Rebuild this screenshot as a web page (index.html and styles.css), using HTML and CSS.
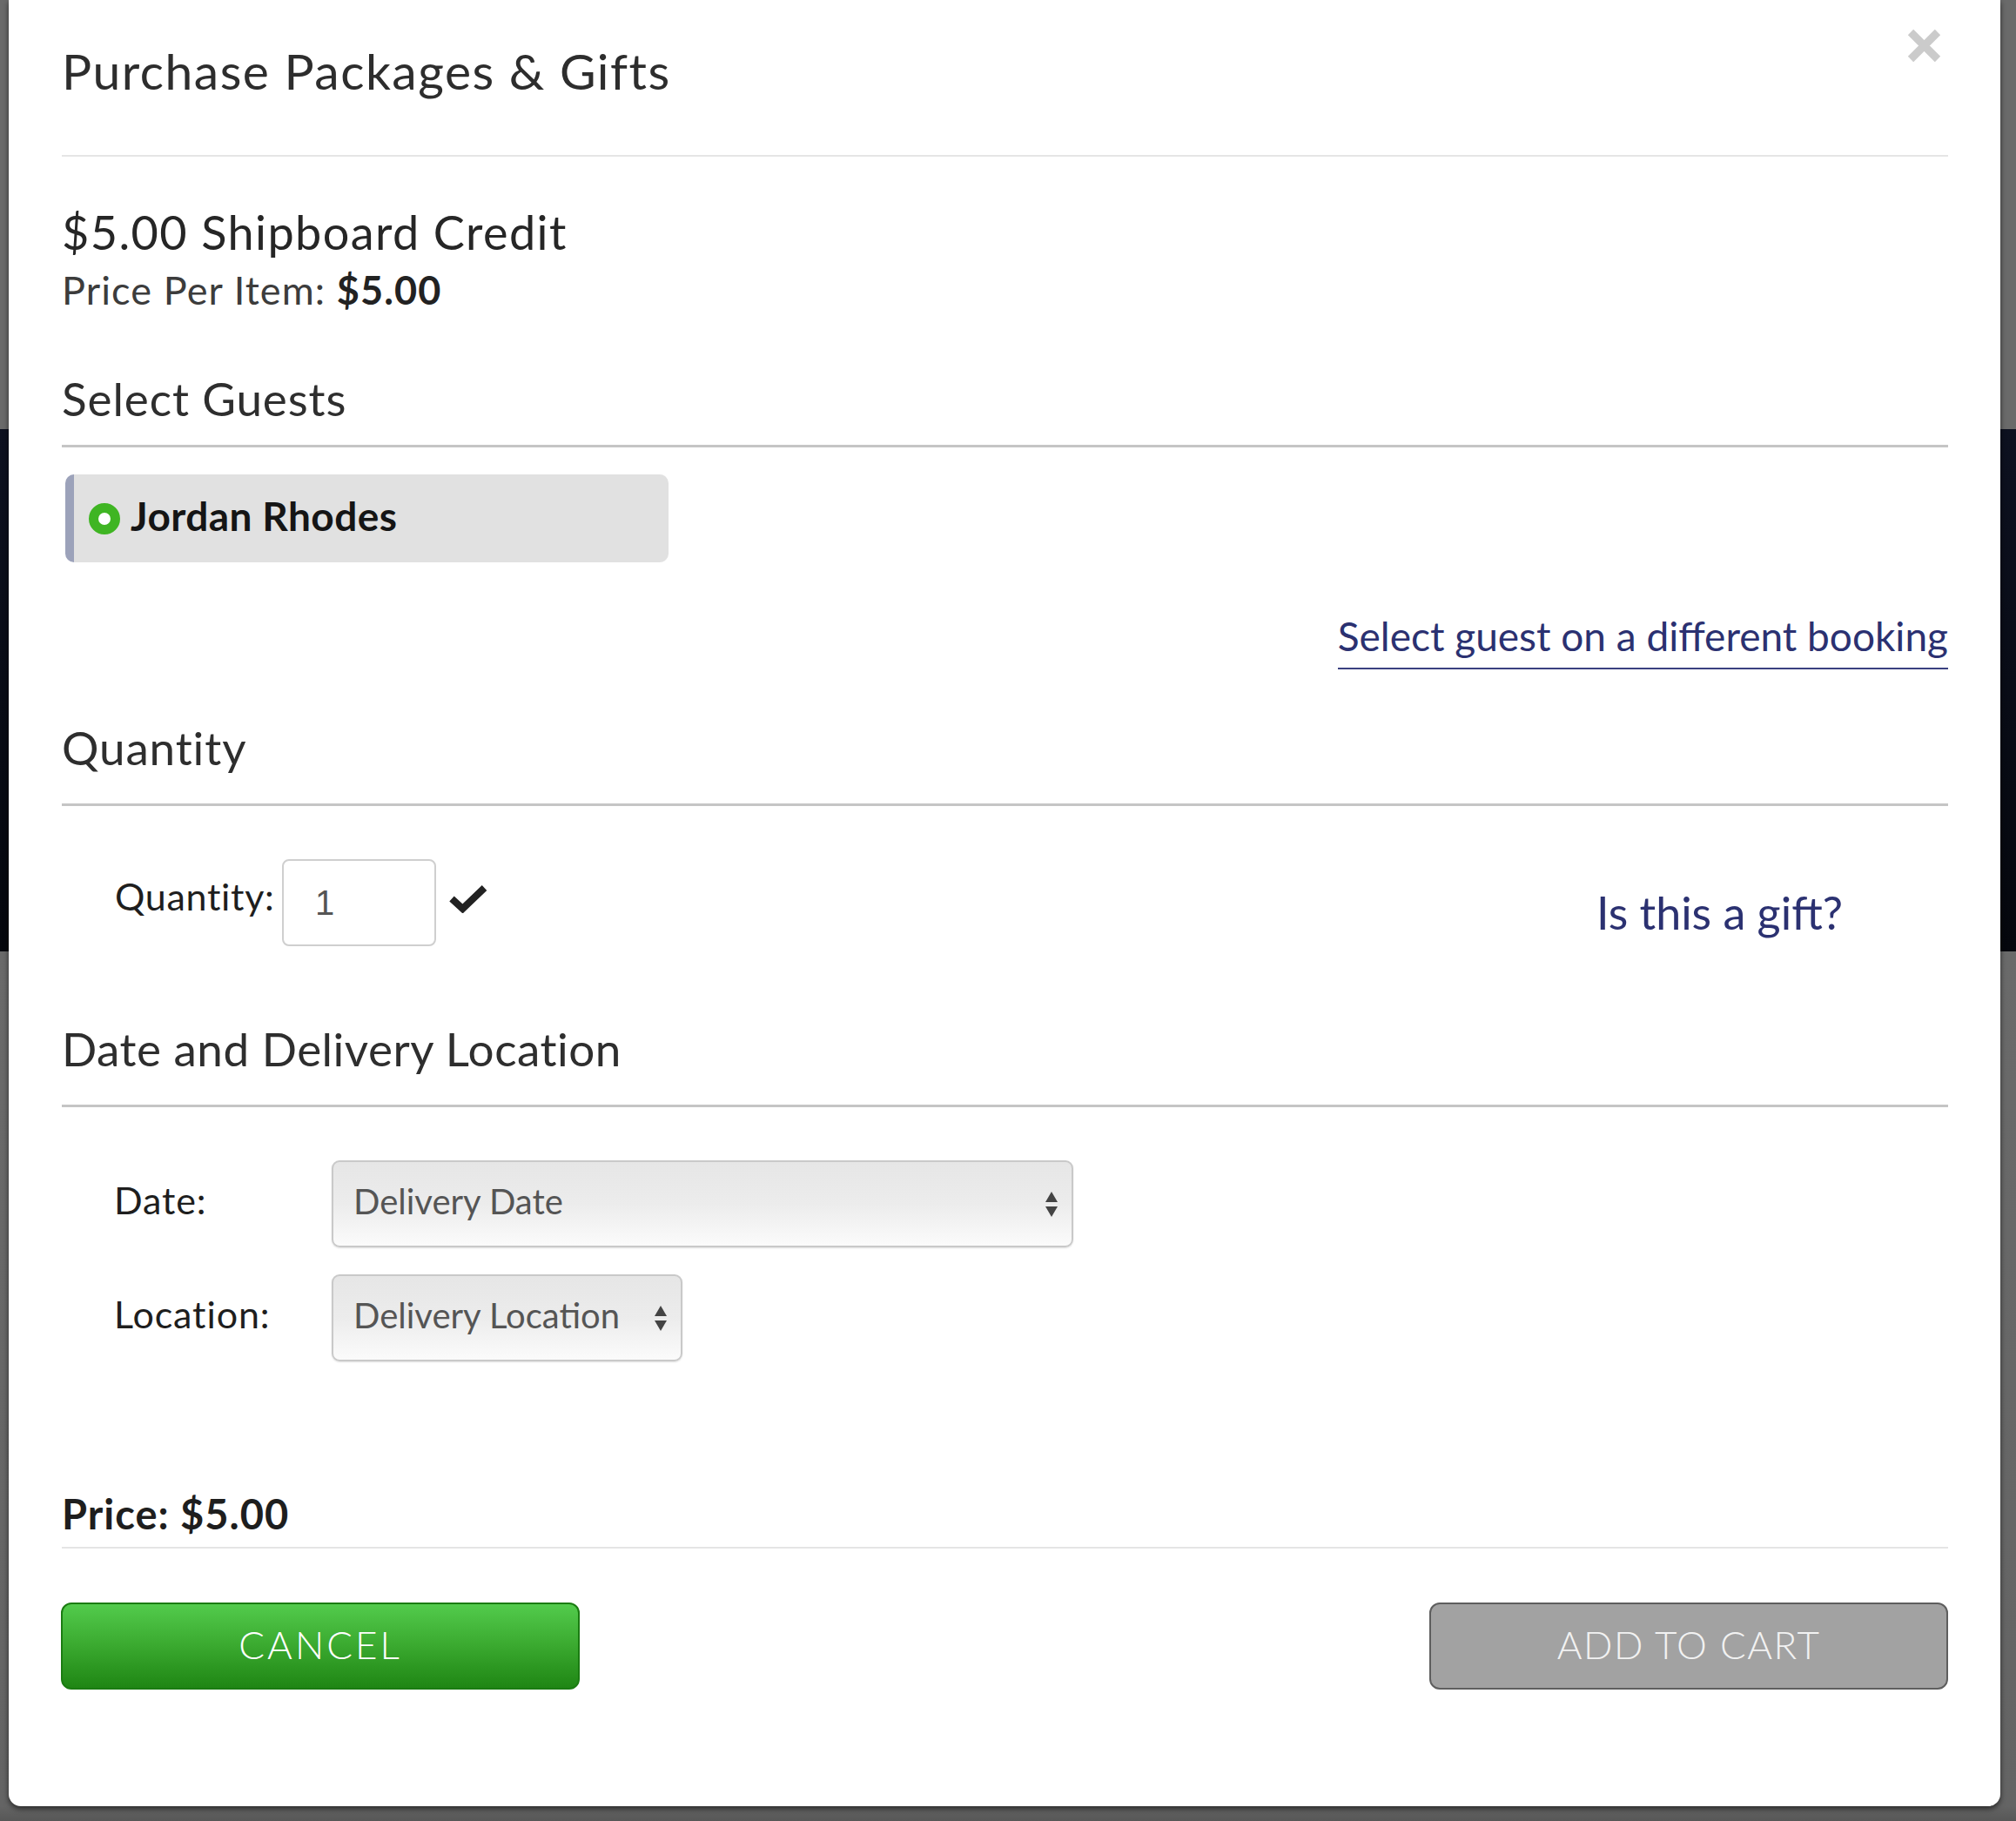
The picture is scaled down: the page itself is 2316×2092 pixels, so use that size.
FILE: index.html
```html
<!DOCTYPE html>
<html lang="en">
<head>
<meta charset="utf-8">
<title>Purchase Packages &amp; Gifts</title>
<link rel="stylesheet" href="styles.css">
</head>
<body>
<div class="modal">
  <button class="close" aria-label="Close">
    <svg width="41" height="41" viewBox="0 0 41 41"><path d="M5 5 L36 36 M36 5 L5 36" stroke="#cbcbcb" stroke-width="9" stroke-linecap="butt" fill="none"/></svg>
  </button>
  <h1 class="title">Purchase Packages &amp; Gifts</h1>
  <div class="rule rule-light rule-top"></div>

  <div class="product-name">$5.00 Shipboard Credit</div>
  <div class="unit-price">Price Per Item: <b>$5.00</b></div>

  <h2 class="section-title st-guests">Select Guests</h2>
  <div class="rule rule-strong rule-guests"></div>
  <div class="guest"><span class="radio"></span><span class="guest-name">Jordan Rhodes</span></div>
  <div class="link-row"><a class="link-booking" href="#">Select guest on a different booking</a></div>

  <h2 class="section-title st-qty">Quantity</h2>
  <div class="rule rule-strong rule-sec"></div>
  <div class="qty-row">
    <span class="qty-label">Quantity:</span>
    <div class="qty-input">1</div>
    <svg class="check" width="44" height="32" viewBox="0 0 44 32"><path d="M3 15.5 L15.5 27 L40.5 3" stroke="#222" stroke-width="8" fill="none" stroke-linejoin="miter"/></svg>
    <a class="gift" href="#">Is this a gift?</a>
  </div>

  <h2 class="section-title st-date">Date and Delivery Location</h2>
  <div class="rule rule-strong rule-sec"></div>
  <div class="field-row fr-date">
    <span class="field-label">Date:</span>
    <div class="select select-wide"><span class="select-text">Delivery Date</span><span class="arrows"><i class="up"></i><i class="down"></i></span></div>
  </div>
  <div class="field-row fr-loc">
    <span class="field-label">Location:</span>
    <div class="select select-narrow"><span class="select-text">Delivery Location</span><span class="arrows"><i class="up"></i><i class="down"></i></span></div>
  </div>

  <div class="total">Price: $5.00</div>
  <div class="rule rule-light rule-total"></div>

  <div class="actions">
    <button class="btn btn-cancel">CANCEL</button>
    <button class="btn btn-add">ADD TO CART</button>
  </div>
</div>
</body>
</html>
```
FILE: styles.css
```css
html, body {
  margin: 0;
  padding: 0;
}
body {
  width: 2316px;
  height: 2092px;
  overflow: hidden;
  font-family: Lato, "Noto Sans", sans-serif;
  background: linear-gradient(to bottom, #6a6a6a 0, #6a6a6a 493px, #0d1120 493px, #05070d 1093px, #6a6a6a 1093px, #646464 2075px, #575757 2092px);
}
.modal {
  position: relative;
  margin-left: 10px;
  width: 2288px;
  height: 2075px;
  box-sizing: border-box;
  background: #fff;
  border-radius: 0 0 14px 14px;
  box-shadow: 0 3px 6px rgba(0, 0, 0, 0.6);
  padding: 48px 60px 0 61px;
  display: flex;
  flex-direction: column;
  color: #2e2e2e;
}
.close {
  position: absolute;
  top: 32px;
  right: 67px;
  width: 41px;
  height: 41px;
  padding: 0;
  border: 0;
  background: none;
}
.close svg { display: block; }
.title {
  margin: 0;
  font-size: 57px;
  line-height: 66px;
  letter-spacing: 1.5px;
  font-weight: 400;
  color: #2d2d2d;
}
.rule { flex: none; }
.rule-light { height: 2px; background: #e5e5e5; }
.rule-strong { height: 3px; background: #c5c5c5; }
.rule-top { margin-top: 64px; }
.product-name {
  margin-top: 56px;
  font-size: 54px;
  line-height: 61px;
  letter-spacing: 1.4px;
  color: #262626;
}
.unit-price {
  margin-top: 11px;
  font-size: 45px;
  line-height: 50px;
  letter-spacing: 1.1px;
  color: #3c3c3c;
}
.unit-price b { color: #222; font-weight: 700; }
.section-title {
  margin: 0;
  font-size: 53px;
  line-height: 60px;
  letter-spacing: 0.9px;
  font-weight: 400;
  color: #2e2e2e;
}
.st-guests { margin-top: 70px; }
.rule-guests { margin-top: 23px; }
.rule-sec { margin-top: 34px; }
.guest {
  margin-top: 31px;
  margin-left: 4px;
  width: 693px;
  height: 101px;
  box-sizing: border-box;
  background: #e1e1e1;
  border-left: 10px solid #9ca2ba;
  border-radius: 10px;
  padding-left: 17px;
  display: flex;
  align-items: center;
}
.radio {
  width: 36px;
  height: 36px;
  box-sizing: border-box;
  border-radius: 50%;
  border: 11px solid #3fb523;
  background: #fff;
  flex: none;
}
.guest-name {
  margin-left: 12px;
  padding-bottom: 6px;
  font-size: 46px;
  line-height: 55px;
  letter-spacing: 0.4px;
  font-weight: 700;
  color: #151515;
}
.link-row {
  margin-top: 58px;
  display: flex;
  justify-content: flex-end;
}
.link-booking {
  font-size: 46px;
  line-height: 53px;
  padding-bottom: 10px;
  border-bottom: 2px solid #3a4080;
  color: #2b3171;
  text-decoration: none;
}
.st-qty { margin-top: 60px; }
.qty-row {
  margin-top: 61px;
  padding-left: 61px;
  display: flex;
  align-items: flex-start;
  height: 100px;
}
.qty-label {
  width: 192px;
  flex: none;
  margin-top: 19px;
  font-size: 43px;
  line-height: 48px;
  letter-spacing: 0.7px;
  color: #1e1e1e;
}
.qty-input {
  width: 177px;
  height: 100px;
  box-sizing: border-box;
  border: 2px solid #cfcfcf;
  border-radius: 8px;
  padding-left: 36px;
  font-family: "Liberation Sans", Arial, sans-serif;
  font-size: 40px;
  line-height: 96px;
  color: #555;
}
.check {
  margin-left: 15px;
  margin-top: 30px;
  display: block;
}
.gift {
  margin-left: auto;
  margin-right: 121px;
  margin-top: 31px;
  font-size: 52px;
  line-height: 60px;
  color: #2b3171;
  text-decoration: none;
}
.st-date { margin-top: 88px; letter-spacing: 0.5px; }
.field-row {
  display: flex;
  align-items: center;
  padding-left: 60px;
}
.fr-date { margin-top: 61px; }
.fr-loc { margin-top: 31px; }
.field-label {
  width: 250px;
  flex: none;
  font-size: 43px;
  line-height: 48px;
  letter-spacing: 0.9px;
  padding-bottom: 9px;
  color: #1e1e1e;
}
.select {
  height: 100px;
  box-sizing: border-box;
  border: 2px solid #c9c9c9;
  border-radius: 9px;
  background: linear-gradient(to bottom, #e6e6e6 0%, #ececec 50%, #fbfbfb 100%);
  box-shadow: 0 1px 2px rgba(0, 0, 0, 0.12);
  display: flex;
  align-items: center;
  justify-content: space-between;
  padding: 0 16px 0 23px;
}
.select-wide { width: 852px; }
.select-narrow { width: 403px; }
.select-text {
  font-size: 40px;
  line-height: 48px;
  padding-bottom: 7px;
  color: #555;
}
.arrows {
  display: flex;
  flex-direction: column;
  gap: 5px;
}
.arrows i {
  display: block;
  width: 0;
  height: 0;
  border-left: 7px solid transparent;
  border-right: 7px solid transparent;
}
.arrows .up { border-bottom: 12px solid #444; }
.arrows .down { border-top: 12px solid #444; }
.total {
  margin-top: 149px;
  font-size: 47px;
  line-height: 52px;
  letter-spacing: 1px;
  font-weight: 700;
  color: #1e1e1e;
}
.rule-total { margin-top: 12px; }
.actions {
  margin-top: 62px;
  display: flex;
  justify-content: space-between;
}
.btn {
  width: 596px;
  height: 100px;
  box-sizing: border-box;
  border-radius: 12px;
  font-family: Lato, "Noto Sans", sans-serif;
  font-weight: 300;
  font-size: 44px;
  letter-spacing: 1.5px;
  padding: 0 0 4px 0;
  color: #fff;
}
.btn-cancel {
  margin-left: -1px;
  letter-spacing: 3px;
  border: 2px solid #1b7c12;
  background: linear-gradient(to bottom, #52cb4c 0%, #3aa92f 50%, #1f8614 100%);
}
.btn-add {
  border: 2px solid #5e5e5e;
  background: #a2a2a2;
  color: #f2f2f2;
}
```
